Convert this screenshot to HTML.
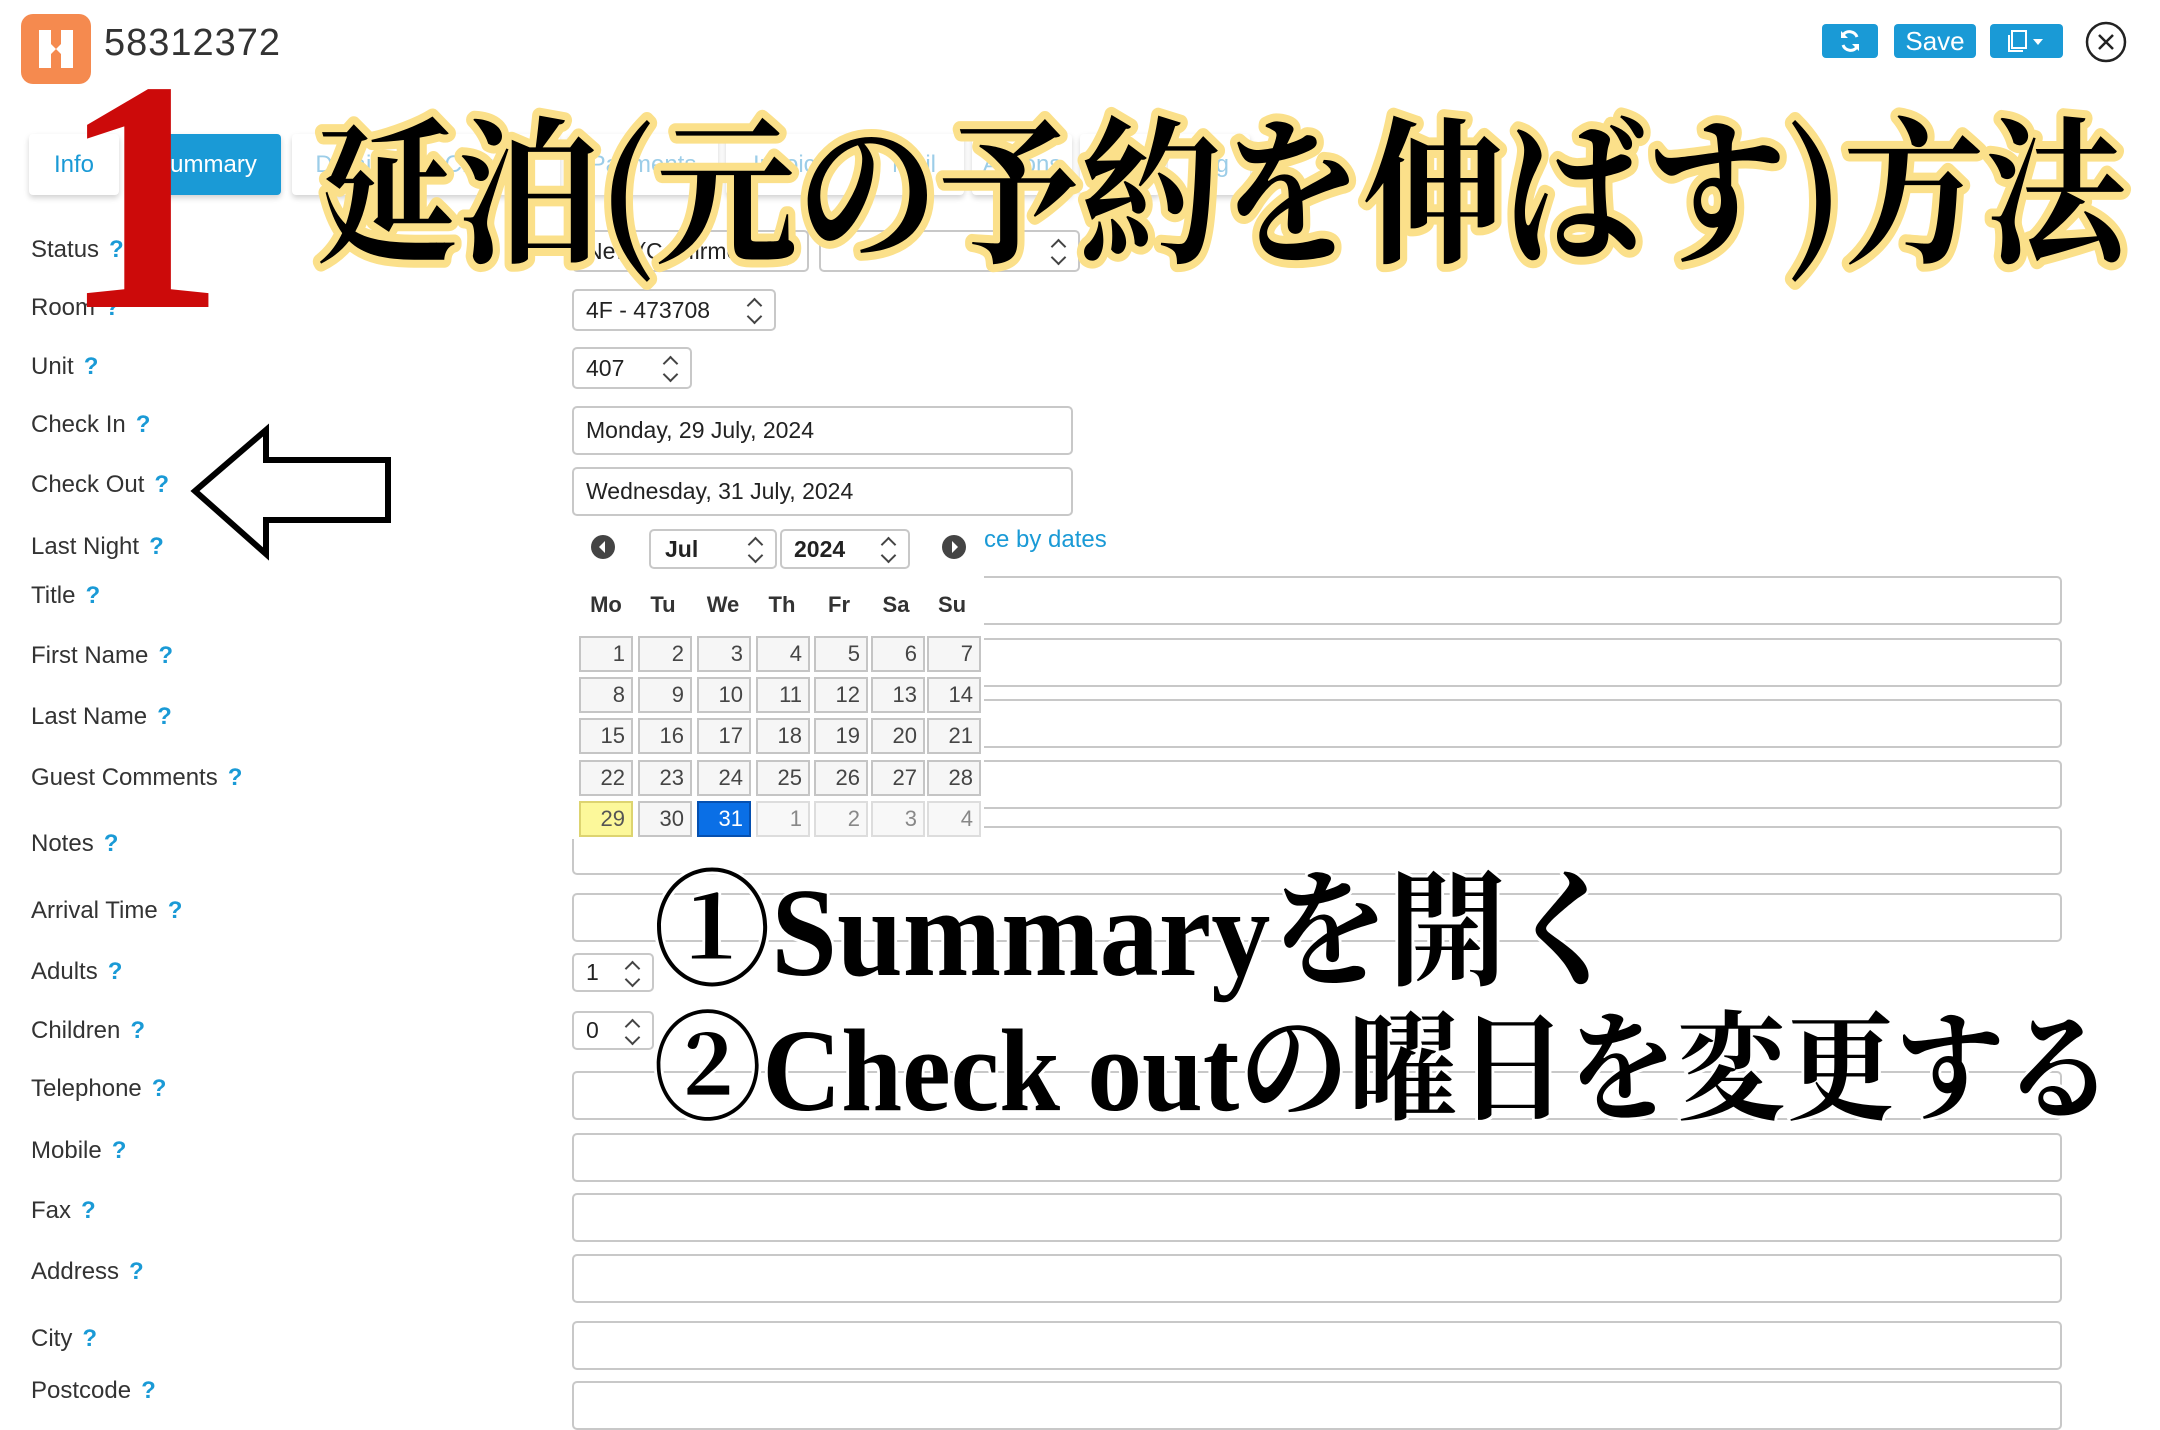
<!DOCTYPE html>
<html><head><meta charset="utf-8"><style>
*{margin:0;padding:0;box-sizing:border-box}
body{width:2160px;height:1385px;overflow:hidden;background:#fff;font-family:"Liberation Sans","Noto Sans CJK JP",sans-serif;color:#333;position:relative}
.a{position:absolute}
.lbl{position:absolute;left:31px;font-size:24px;line-height:30px;color:#333}
.lbl b{color:#1a9ad6;margin-left:10px;font-weight:bold}
.in{position:absolute;border:2px solid #c8c8c8;border-radius:5px;background:#fff;font-size:23px;color:#222;padding-left:12px;display:flex;align-items:center}
.sel::after{content:"";position:absolute;right:14px;top:50%;width:9px;height:9px;border-left:2px solid #444;border-top:2px solid #444;transform:translateY(-10px) rotate(45deg)}
.sel::before{content:"";position:absolute;right:14px;top:50%;width:9px;height:9px;border-right:2px solid #444;border-bottom:2px solid #444;transform:translateY(1px) rotate(45deg)}
.tab{position:absolute;top:134px;height:61px;background:#fff;border-radius:4px;box-shadow:0 3px 6px rgba(0,0,0,.18);color:#1a9ad6;font-size:24px;display:flex;align-items:center;justify-content:center}
.btn{position:absolute;top:24px;height:34px;background:#1a9ad6;border-radius:4px;color:#fff;font-size:26px;display:flex;align-items:center;justify-content:center}
.c{position:absolute;width:54px;height:36px;background:#f6f6f6;border:2px solid #c5c5c5;font-size:22px;color:#454545;text-align:right;padding-right:6px;line-height:32px}
.h{position:absolute;top:592px;font-size:22px;font-weight:bold;color:#333;width:54px;text-align:center}
</style></head><body>
<div class="a" style="left:21px;top:14px;width:70px;height:70px;background:#f58a4f;border-radius:12px"></div>
<svg class="a" style="left:21px;top:14px" width="70" height="70"><path d="M18 16h12v14l5 5-5 5v14H18z M52 16H40v14l-5 5 5 5v14h12z" fill="#fff"/></svg>
<div class="a" style="left:104px;top:22px;font-size:38px;color:#333;letter-spacing:1px">58312372</div>

<div class="btn" style="left:1822px;width:56px"><svg width="30" height="26" viewBox="0 0 30 26"><path d="M22 9a8 8 0 0 0-14-2M8 17a8 8 0 0 0 14 2" stroke="#fff" stroke-width="3" fill="none"/><path d="M6 3v7h7z M24 23v-7h-7z" fill="#fff"/></svg></div>
<div class="btn" style="left:1894px;width:82px">Save</div>
<div class="btn" style="left:1990px;width:73px"><svg width="50" height="26"><rect x="10" y="3" width="14" height="17" stroke="#fff" stroke-width="2" fill="none"/><path d="M7 7v16h14" stroke="#fff" stroke-width="2" fill="none"/><path d="M31 11h10l-5 6z" fill="#fff"/></svg></div>
<svg class="a" style="left:2085px;top:21px" width="42" height="42"><circle cx="21" cy="21" r="19" stroke="#222" stroke-width="2.5" fill="#fff"/><path d="M14 14l14 14M28 14L14 28" stroke="#222" stroke-width="2.5"/></svg>

<div class="tab" style="left:29px;width:90px">Info</div>
<div class="tab" style="left:130px;width:151px;background:#1a9ad6;color:#fff">Summary</div>
<div class="tab" style="left:292px;width:120px;color:#9ccde8">Details</div>
<div class="tab" style="left:420px;width:140px;color:#9ccde8">Charges</div>
<div class="tab" style="left:568px;width:150px;color:#9ccde8">Payments</div>
<div class="tab" style="left:726px;width:130px;color:#9ccde8">Invoice</div>
<div class="tab" style="left:864px;width:100px;color:#9ccde8">Mail</div>
<div class="tab" style="left:972px;width:100px;color:#9ccde8">Actions</div>
<div class="tab" style="left:1080px;width:80px;color:#9ccde8">Gu</div>
<div class="tab" style="left:1168px;width:82px;color:#9ccde8">Log</div>

<div class="lbl" style="top:235px">Status<b>?</b></div>
<div class="lbl" style="top:293px">Room<b>?</b></div>
<div class="lbl" style="top:352px">Unit<b>?</b></div>
<div class="lbl" style="top:410px">Check In<b>?</b></div>
<div class="lbl" style="top:470px">Check Out<b>?</b></div>
<div class="lbl" style="top:532px">Last Night<b>?</b></div>
<div class="lbl" style="top:581px">Title<b>?</b></div>
<div class="lbl" style="top:641px">First Name<b>?</b></div>
<div class="lbl" style="top:702px">Last Name<b>?</b></div>
<div class="lbl" style="top:763px">Guest Comments<b>?</b></div>
<div class="lbl" style="top:829px">Notes<b>?</b></div>
<div class="lbl" style="top:896px">Arrival Time<b>?</b></div>
<div class="lbl" style="top:957px">Adults<b>?</b></div>
<div class="lbl" style="top:1016px">Children<b>?</b></div>
<div class="lbl" style="top:1074px">Telephone<b>?</b></div>
<div class="lbl" style="top:1136px">Mobile<b>?</b></div>
<div class="lbl" style="top:1196px">Fax<b>?</b></div>
<div class="lbl" style="top:1257px">Address<b>?</b></div>
<div class="lbl" style="top:1324px">City<b>?</b></div>
<div class="lbl" style="top:1376px">Postcode<b>?</b></div>

<div class="in sel" style="left:572px;top:230px;width:237px;height:42px">New (Confirmed)</div>
<div class="in sel" style="left:819px;top:230px;width:261px;height:42px"></div>
<div class="in sel" style="left:572px;top:289px;width:204px;height:42px">4F - 473708</div>
<div class="in sel" style="left:572px;top:347px;width:120px;height:42px">407</div>
<div class="in" style="left:572px;top:406px;width:501px;height:49px">Monday, 29 July, 2024</div>
<div class="in" style="left:572px;top:467px;width:501px;height:49px">Wednesday, 31 July, 2024</div>
<div class="in" style="left:572px;top:576px;width:1490px;height:49px"></div>
<div class="in" style="left:572px;top:638px;width:1490px;height:49px"></div>
<div class="in" style="left:572px;top:699px;width:1490px;height:49px"></div>
<div class="in" style="left:572px;top:760px;width:1490px;height:49px"></div>
<div class="in" style="left:572px;top:826px;width:1490px;height:49px;align-items:flex-start;overflow:hidden"><span style="margin-top:-12px;line-height:24px">MIXED</span></div>
<div class="in" style="left:572px;top:893px;width:1490px;height:49px"></div>
<div class="in sel" style="left:572px;top:953px;width:82px;height:39px">1</div>
<div class="in sel" style="left:572px;top:1011px;width:82px;height:39px">0</div>
<div class="in" style="left:572px;top:1071px;width:1490px;height:49px"></div>
<div class="in" style="left:572px;top:1133px;width:1490px;height:49px"></div>
<div class="in" style="left:572px;top:1193px;width:1490px;height:49px"></div>
<div class="in" style="left:572px;top:1254px;width:1490px;height:49px"></div>
<div class="in" style="left:572px;top:1321px;width:1490px;height:49px"></div>
<div class="in" style="left:572px;top:1381px;width:1490px;height:49px"></div>

<div class="a" style="left:572px;top:523px;width:412px;height:316px;background:#fff"></div>
<svg class="a" style="left:590px;top:534px" width="26" height="26"><circle cx="13" cy="13" r="12" fill="#444"/><path d="M15 7l-6 6 6 6z" fill="#fff"/></svg>
<svg class="a" style="left:941px;top:534px" width="26" height="26"><circle cx="13" cy="13" r="12" fill="#444"/><path d="M11 7l6 6-6 6z" fill="#fff"/></svg>
<div class="in sel" style="left:649px;top:529px;width:128px;height:40px;font-weight:bold;padding-left:14px">Jul</div>
<div class="in sel" style="left:780px;top:529px;width:130px;height:40px;font-weight:bold;padding-left:12px">2024</div>
<div class="a" style="left:984px;top:526px;font-size:24px;color:#1a9ad6">ce by dates</div>
<div class="h" style="left:579px">Mo</div><div class="h" style="left:636px">Tu</div><div class="h" style="left:696px">We</div><div class="h" style="left:755px">Th</div><div class="h" style="left:812px">Fr</div><div class="h" style="left:869px">Sa</div><div class="h" style="left:925px">Su</div>
<div id="g"></div>
<script>
var g=document.getElementById('g'),xs=[579,638,697,756,814,871,927],ys=[636,677,718,760,801],h='';
for(var r=0;r<5;r++)for(var c=0;c<7;c++){var d=r*7+c+1,t=d>31?d-31:d,st='left:'+xs[c]+'px;top:'+ys[r]+'px;';
if(d==29)st+='background:#fcf89a;border-color:#ddd470;color:#555;';
if(d==31)st+='background:#0a6fe6;border-color:#0550b0;color:#fff;';
if(d>31)st+='color:#888;background:#f8f8f8;border-color:#ddd;';
h+='<div class="c" style="'+st+'">'+t+'</div>';}
g.innerHTML=h;
</script>

<svg class="a" style="left:0;top:0" width="2160" height="1385">
<text x="143" y="307" text-anchor="middle" font-family="Liberation Serif,serif" font-weight="bold" font-size="330" fill="#cc0a0a">1</text>
<path d="M195 491L266 430V460H388V520H266V554Z" fill="#fff" stroke="#000" stroke-width="6" stroke-linejoin="miter"/>
<text x="316" y="250" textLength="1810" lengthAdjust="spacingAndGlyphs" font-family="Noto Serif CJK SC,Noto Serif CJK JP,serif" font-weight="700" font-size="158" fill="#000" stroke="#fbe08a" stroke-width="16" stroke-linejoin="round" paint-order="stroke">延泊(元の予約を伸ばす)方法</text>
<text x="653" y="975" textLength="972" lengthAdjust="spacingAndGlyphs" font-family="Liberation Serif,Noto Serif CJK JP,serif" font-weight="bold" font-size="126" fill="#000" stroke="#fff" stroke-width="6" paint-order="stroke">①Summaryを開く</text>
<text x="653" y="1110" textLength="1461" lengthAdjust="spacingAndGlyphs" font-family="Liberation Serif,Noto Serif CJK JP,serif" font-weight="bold" font-size="118" fill="#000" stroke="#fff" stroke-width="6" paint-order="stroke">②Check outの曜日を変更する</text>
</svg>
</body></html>
